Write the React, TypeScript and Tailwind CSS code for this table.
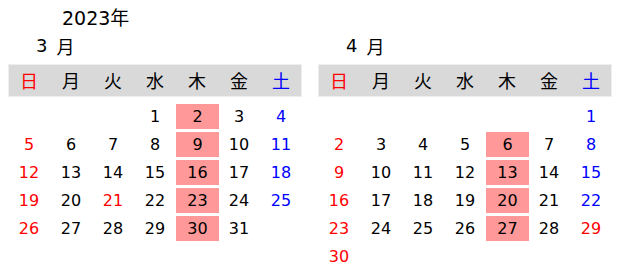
import React from "react";

type Cell = { d: number | null; holiday?: boolean };

function buildWeeks(startDow: number, days: number, holidays: number[]): Cell[][] {
  const cells: Cell[] = [];
  for (let i = 0; i < startDow; i++) cells.push({ d: null });
  for (let d = 1; d <= days; d++) cells.push({ d, holiday: holidays.includes(d) });
  while (cells.length % 7 !== 0) cells.push({ d: null });
  const weeks: Cell[][] = [];
  for (let i = 0; i < cells.length; i += 7) weeks.push(cells.slice(i, i + 7));
  return weeks;
}

const DOW = ["日", "月", "火", "水", "木", "金", "土"];

function Month({ num, weeks }: { num: string; weeks: Cell[][] }) {
  return (
    <div className="w-[294px] flex flex-col">
      <div className="pl-[28px] h-[24px] text-[18px] leading-[24px] text-black flex items-center">
        <span className="font-['DejaVu_Sans']">{num}</span>
        <span className="ml-[9px]">月</span>
      </div>
      <div className="mt-[6px] h-[33px] bg-[#d9d9d9] shadow-[inset_0_0_0_1px_#eeeeee] grid grid-cols-[repeat(7,42px)] items-center">
        {DOW.map((w, i) => (
          <div
            key={w}
            className={
              "text-center text-[18px] leading-[33px] " +
              (i === 0 ? "text-[#ff0000]" : i === 6 ? "text-[#0000ff]" : "text-black")
            }
          >
            {w}
          </div>
        ))}
      </div>
      <div className="mt-[5px] flex flex-col">
        {weeks.map((wk, r) => (
          <div key={r} className="h-[28px] grid grid-cols-[repeat(7,42px)]">
            {wk.map((c, i) => {
              const color =
                c.d === null
                  ? ""
                  : c.holiday || i === 0
                  ? "text-[#ff0000]"
                  : i === 6
                  ? "text-[#0000ff]"
                  : "text-black";
              const hl = i === 4 && c.d !== null;
              return (
                <div key={i} className="h-[28px] flex flex-col">
                  <div
                    className={
                      "mt-[2px] h-[25px] flex items-center justify-center text-[16px] leading-none font-['DejaVu_Sans'] " +
                      color +
                      (hl ? " bg-[#ff9999] w-[43px]" : "")
                    }
                  >
                    {c.d ?? ""}
                  </div>
                </div>
              );
            })}
          </div>
        ))}
      </div>
    </div>
  );
}

export default function App() {
  const march = buildWeeks(3, 31, [21]);
  const april = buildWeeks(6, 30, [29]);
  return (
    <div
      className="w-[621px] h-[270px] bg-white overflow-hidden"
      style={{ fontFamily: '"Noto Sans CJK JP", "Noto Sans", sans-serif' }}
    >
      <div className="pl-[62px] pt-[4px] h-[34px] text-[19px] leading-[26px] text-black">
        <span className="font-['DejaVu_Sans']">2023</span>
        <span>年</span>
      </div>
      <div className="flex gap-[16px] pl-[8px]">
        <Month num="3" weeks={march} />
        <Month num="4" weeks={april} />
      </div>
    </div>
  );
}
